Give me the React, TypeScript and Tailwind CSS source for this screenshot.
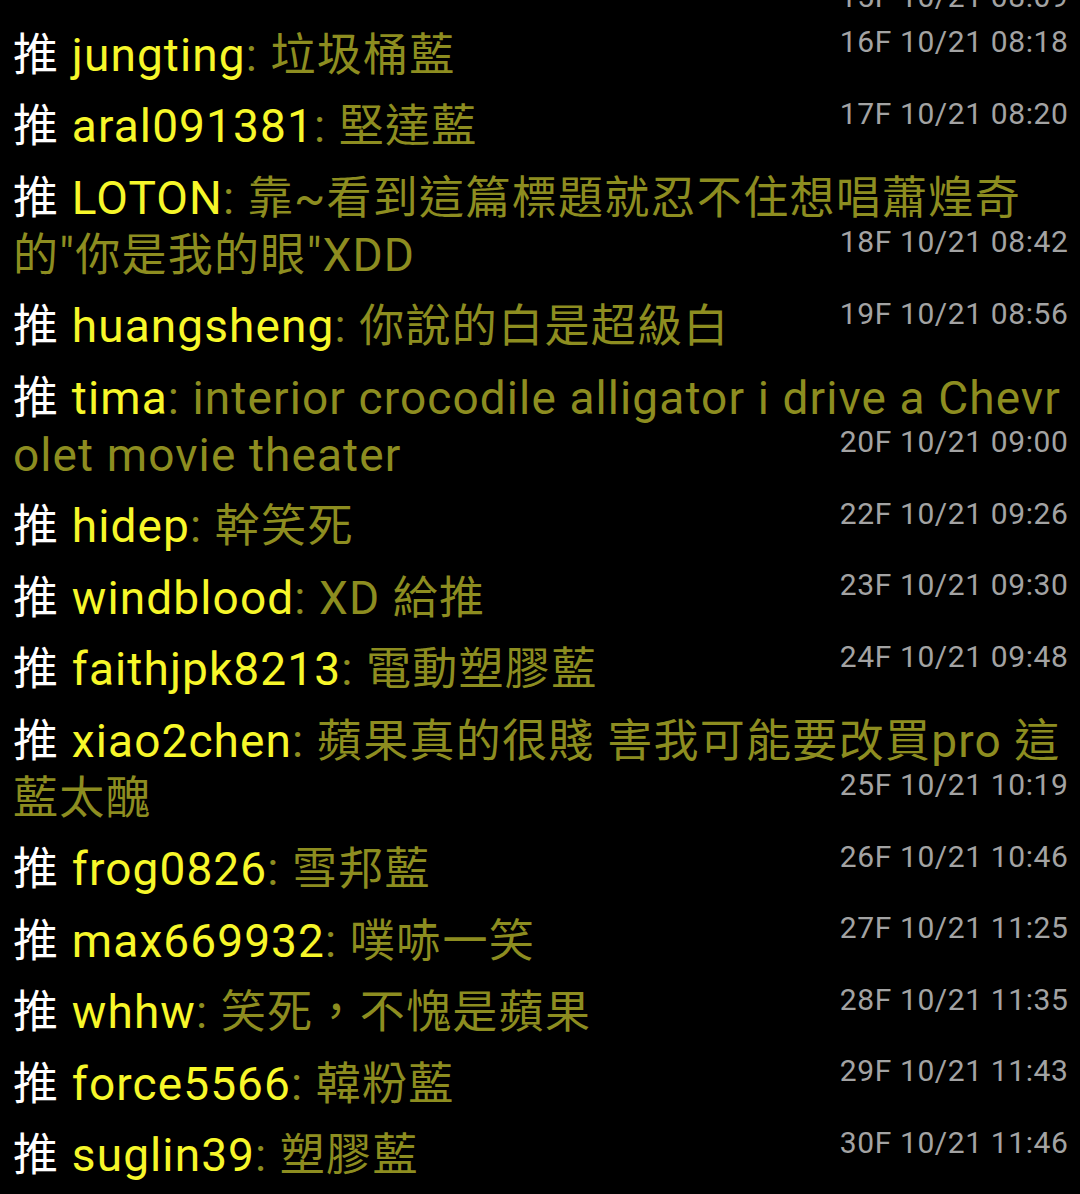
import React from "react";

type Row = { user: string; text: string; floor: string; time: string };

const rows: Row[] = [
  { user: "jungting", text: "垃圾桶藍", floor: "16F", time: "10/21 08:18" },
  { user: "aral091381", text: "堅達藍", floor: "17F", time: "10/21 08:20" },
  { user: "LOTON", text: "靠~看到這篇標題就忍不住想唱蕭煌奇的\"你是我的眼\"XDD", floor: "18F", time: "10/21 08:42" },
  { user: "huangsheng", text: "你說的白是超級白", floor: "19F", time: "10/21 08:56" },
  { user: "tima", text: "interior crocodile alligator i drive a Chevrolet movie theater", floor: "20F", time: "10/21 09:00" },
  { user: "hidep", text: "幹笑死", floor: "22F", time: "10/21 09:26" },
  { user: "windblood", text: "XD 給推", floor: "23F", time: "10/21 09:30" },
  { user: "faithjpk8213", text: "電動塑膠藍", floor: "24F", time: "10/21 09:48" },
  { user: "xiao2chen", text: "蘋果真的很賤 害我可能要改買pro 這藍太醜", floor: "25F", time: "10/21 10:19" },
  { user: "frog0826", text: "雪邦藍", floor: "26F", time: "10/21 10:46" },
  { user: "max669932", text: "噗哧一笑", floor: "27F", time: "10/21 11:25" },
  { user: "whhw", text: "笑死，不愧是蘋果", floor: "28F", time: "10/21 11:35" },
  { user: "force5566", text: "韓粉藍", floor: "29F", time: "10/21 11:43" },
  { user: "suglin39", text: "塑膠藍", floor: "30F", time: "10/21 11:46" },
];

const font = { fontFamily: 'Roboto, "Noto Sans CJK TC", sans-serif' };

function Runs({ s }: { s: string }) {
  const parts = s.match(/[\x00-\x7F]+|[^\x00-\x7F]+/g) || [];
  return (
    <>
      {parts.map((p, i) =>
        /^[\x00-\x7F]/.test(p) ? (
          <span key={i} className="text-[46px] tracking-[1.1px]">{p}</span>
        ) : (
          <span key={i} className="text-[45px] tracking-[1.3px]">{p}</span>
        )
      )}
    </>
  );
}

export default function App() {
  return (
    <div className="w-[1080px] h-[1194px] overflow-hidden bg-black" style={font}>
      <div className="h-[19.5px] flex items-end justify-end pl-[13px] pr-[15px]">
        <span className="text-[30px] leading-[30px] tracking-[0.6px] text-[#a3a3a3] mb-[8px] mr-[-3.5px] whitespace-nowrap">
          15F 10/21 08:09
        </span>
      </div>
      {rows.map((r) => (
        <div key={r.floor} className="grid pl-[13px] pr-[15px] pt-[7px] pb-[7.5px]">
          <div className="col-start-1 row-start-1 text-[45px] leading-[57px] break-all">
            <span className="text-white">
              <Runs s="推 " />
            </span>
            <span className="text-[#f7f72a]">
              <Runs s={r.user} />
            </span>
            <span className="text-[#8d8d20]">
              <Runs s={": " + r.text} />
            </span>
          </div>
          <div className="col-start-1 row-start-1 self-end justify-self-end text-[30px] leading-[30px] tracking-[0.6px] text-[#a3a3a3] mb-[26.5px] mr-[-3.5px] whitespace-nowrap">
            {r.floor} {r.time}
          </div>
        </div>
      ))}
    </div>
  );
}
